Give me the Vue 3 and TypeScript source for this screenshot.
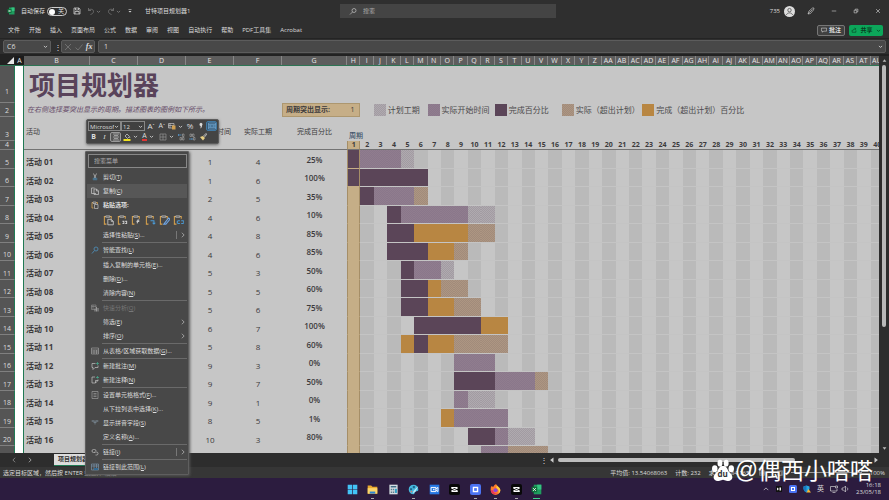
<script setup lang="ts">
import { h, ref } from 'vue'

type Shape = { d: string; f?: string; s?: string; w?: number }
type Kind = 'done' | 'actual' | 'plan' | 'over' | 'overdone'
type Segment = [Kind, number, number]
interface Task { start: number; days: number; pct: number; bars: Segment[] }
interface MenuItem { text?: string; key?: string; tail?: string; icon?: string; arrow?: boolean; split?: boolean; state?: string; kind?: 'line' | 'paste' }

// All icons share a 16 x 16 canvas.
const icons: Record<string, Shape[]> = {
  excel: [{ d: 'M4 1h11v14H4z', f: '#1f9d5f' }, { d: 'M9 1h6v7H9z', f: '#35c481' }, { d: 'M1 4h8v8H1z', f: '#0f703b' }, { d: 'M3 6l4 4M7 6l-4 4', s: '#fff', w: 1.3 }],
  save: [{ d: 'M2 2h10l2 2v10H2zM5 2v4h6V2M4 14V9h8v5', s: '#ddd', w: 1.4 }],
  undo: [{ d: 'M3 2v5h5M3 7c3-4 10-3 10 2 0 3-3 5-6 6', s: '#777', w: 1.6 }],
  redo: [{ d: 'M13 2v5H8M13 7C10 3 3 4 3 9c0 3 3 5 6 6', s: '#777', w: 1.6 }],
  caret: [{ d: 'M3 6l5 5 5-5', s: '#ddd', w: 2.6 }],
  caretDim: [{ d: 'M3 6l5 5 5-5', s: '#888', w: 2.4 }],
  more: [{ d: 'M4 4h8', s: '#ddd', w: 1.5 }, { d: 'M4 8h8l-4 4z', f: '#ddd' }],
  search: [{ d: 'M6 7a4 4 0 1 0 8 0 4 4 0 1 0-8 0M7 10l-5 5', s: '#bbb', w: 1.5 }],
  find: [{ d: 'M6 6a4 4 0 1 0 8 0 4 4 0 1 0-8 0M7 9l-5 6', s: '#4d84a8', w: 2 }],
  user: [{ d: 'M0 8a8 8 0 1 0 16 0 8 8 0 1 0-16 0', f: '#ddd' }, { d: 'M5.500 6a2.500 2.500 0 1 0 5 0 2.500 2.500 0 1 0-5 0M3.500 13c1-4 8-4 9 0', s: '#555', w: 1.2 }],
  pen: [{ d: 'M2 14l2-6 7-6h3l-1 4-6 7zM5 11l6-6M2 14l3-3', s: '#ccc', w: 1.3 }],
  min: [{ d: 'M2 8h12', s: '#ddd', w: 1.5 }],
  restore: [{ d: 'M3 6h7v7H3zM6 6V3h7v7h-3', s: '#ddd', w: 1.5 }],
  close: [{ d: 'M3 3l10 10M13 3L3 13', s: '#ddd', w: 1.6 }],
  bubble: [{ d: 'M1 3h14v8H7l-3 3v-3H1z', s: '#ddd', w: 1.5 }],
  share: [{ d: 'M3 8v6h10V9M5 10c0-4 3-5 7-5M10 2l3 3-3 3', s: '#083d21', w: 1.6 }],
  shareDown: [{ d: 'M3 6l5 5 5-5', s: '#083d21', w: 2.4 }],
  cancel: [{ d: 'M2 2l12 12M14 2L2 14', s: '#7c7c7c', w: 1.5 }],
  check: [{ d: 'M1 9l5 5 9-11', s: '#7c7c7c', w: 1.5 }],
  cut: [{ d: 'M5 1l4 9M11 1L7 10', s: '#ccc', w: 1.3 }, { d: 'M4 12a2 2 0 1 0 4 0 2 2 0 1 0-4 0M8 12a2 2 0 1 0 4 0 2 2 0 1 0-4 0', s: '#4c90bd', w: 1.3 }],
  copy: [{ d: 'M10 13H1V2h6M6 4h5l4 4v7H6zM11 4v4h4', s: '#ccc', w: 1.4 }],
  paste: [{ d: 'M5 14H2V3h2M10 3h3v3', s: '#d7a14c', w: 1.6 }, { d: 'M4 2h6v3H4zM7 7h7v8H7z', s: '#ccc', w: 1.3 }],
  quick: [{ d: 'M1 2h9v9H1zM1 5h9M4 2v9', s: '#8b8b8b', w: 1.3 }, { d: 'M7 9h2v6H7zM10 6h2v9h-2zM13 8h2v7h-2z', f: '#999' }],
  table: [{ d: 'M1 2h14v12H1zM1 6h14M1 10h14M6 6v8M11 6v8', s: '#aaa', w: 1.2 }],
  comment: [{ d: 'M9 3H2v8h2v4l4-4h6V7', s: '#ccc', w: 1.3 }, { d: 'M13 0v6M10 3h6', s: '#46a88c', w: 1.5 }],
  note: [{ d: 'M8 2H2v12h7l5-5V7M9 14V9h5', s: '#ccc', w: 1.3 }, { d: 'M13 0v5M10 3h6', s: '#46a88c', w: 1.5 }],
  format: [{ d: 'M2 1h12v14H2zM5 5h6M5 8h6M5 11h6', s: '#aaa', w: 1.2 }],
  pinyin: [{ d: 'M1 4h14M4 2v4M12 2v4M8 4v7M5 7h6', s: '#7d8c98', w: 1.4 }],
  link: [{ d: 'M8 9H5a3 3 0 1 1 0-6h2a3 3 0 0 1 3 3M7 8h4a3 3 0 1 1 0 6H9', s: '#bbb', w: 1.5 }],
  range: [{ d: 'M1 2h14v12H1zM1 6h14M6 2v12M11 2v12', s: '#7d9cb5', w: 1.2 }, { d: 'M6 10h8v4H6z', f: '#346a92' }],
  right: [{ d: 'M5 2l6 6-6 6', s: '#bbb', w: 2 }],
  left: [{ d: 'M11 2L5 8l6 6', s: '#999', w: 2 }],
  up: [{ d: 'M2 11l6-6 6 6', s: '#ddd', w: 1.8 }],
  triUp: [{ d: 'M2 12h12L8 4z', f: '#bbb' }],
  triDown: [{ d: 'M2 4h12l-6 8z', f: '#bbb' }],
  triLeft: [{ d: 'M12 1v14L3 8z', f: '#ccc' }],
  triRight: [{ d: 'M4 1v14l9-7z', f: '#ccc' }],
  corner: [{ d: 'M16 0v16H0z', f: '#e8e8e8' }],
  center: [{ d: 'M2 2h12M4 5h8M2 8h12M4 11h8M2 14h12', s: '#ccc', w: 1.2 }],
  fill: [{ d: 'M4 6l4-4 5 5-4 4zM13 8l1 2', s: '#ddd', w: 1.3 }, { d: 'M1 12h14v4H1z', f: '#f0e21e' }],
  borders: [{ d: 'M2 2h12v12H2zM2 8h12M8 2v12', s: '#999', w: 1.3 }],
  numfmt: [{ d: 'M1 3h11v9H1zM4 3v9M1 7h11', s: '#ccc', w: 1.3 }, { d: 'M8 7h7v8H8z', f: '#cf9f50' }],
  merge: [{ d: 'M1 2h14v12H1zM1 5h14M1 11h14', s: '#7fb4dc', w: 1.2 }, { d: 'M3 8h10M5 6L3 8l2 2M11 6l2 2-2 2', s: '#7fc2f4', w: 1.2 }],
  decUp: [{ d: 'M9 4H2M4 2L2 4l2 2', s: '#5796c8', w: 1.5 }, { d: 'M11 2h3v5h-3zM6 9h3v5H6zM11 9h3v5h-3z', s: '#aaa', w: 1.2 }],
  decDown: [{ d: 'M2 12h7M7 10l2 2-2 2', s: '#5796c8', w: 1.5 }, { d: 'M4 2h3v5H4zM9 2h3v5H9zM11 9h3v5h-3z', s: '#aaa', w: 1.2 }],
  brush: [{ d: 'M9 6l5-5 1 2-4 5', s: '#ddd', w: 1.6 }, { d: 'M2 8l6-2 4 4-4 5z', f: '#e8cf83' }],
  comma: [{ d: 'M5 5a3 3 0 1 1 5 2c0 3-1 5-4 6 1-1 2-3 1-5a3 3 0 0 1-2-3', f: '#ddd' }],
  win: [{ d: 'M1 1h6.500v6.500H1zM8.500 1H15v6.500H8.500zM1 8.500h6.500V15H1zM8.500 8.500H15V15H8.500z', f: '#43c3f7' }],
  folder: [{ d: 'M1 2h5l2 2h7v10H1z', f: '#e9a92d' }, { d: 'M1 6h14v8H1z', f: '#fcd56a' }, { d: 'M4 11h8v3H4z', f: '#2d86d4' }],
  calc: [{ d: 'M2 1h12v14H2z', f: '#d5dde2' }, { d: 'M4 3h8v2H4z', f: '#37657e' }, { d: 'M4 7h2v2H4zM7 7h2v2H7zM4 11h2v2H4zM7 11h2v2H7z', f: '#5b7c8c' }, { d: 'M10 7h3v6h-3z', f: '#2f9fc4' }],
  palette: [{ d: 'M8 1a7 7 0 1 0 0 14c2 0 1-3 3-4s4 0 4-3a7 7 0 0 0-7-7', f: '#45b8dc' }, { d: 'M3 6h3v3H3zM7 3h3v3H7z', f: '#1d668c' }, { d: 'M15 3l-7 7-1 4 4-3z', f: '#bcecf6' }, { d: 'M4 10h2v2H4z', f: '#e87562' }],
  video: [{ d: 'M1 1h14v14H1z', f: '#2779e4' }, { d: 'M3 5h7v6H3zM10 7l3-2v6l-3-2', s: '#fff', w: 1.4 }, { d: 'M6 7h2v2H6z', f: '#fff' }],
  cap: [{ d: 'M3 0h10a3 3 0 0 1 3 3v10a3 3 0 0 1-3 3H3a3 3 0 0 1-3-3V3a3 3 0 0 1 3-3', f: '#080808' }, { d: 'M12 5H4v1l8 4v1H4M4 11v-1l8-4V5', s: '#fff', w: 1.5 }],
  chat: [{ d: 'M3 0h10a3 3 0 0 1 3 3v10a3 3 0 0 1-3 3H3a3 3 0 0 1-3-3V3a3 3 0 0 1 3-3', f: '#4b73f3' }, { d: 'M4 4h8v8H4z', f: '#fff' }, { d: 'M6 6h4v4H6z', f: '#4b73f3' }],
  fox: [{ d: 'M2 3c1 1 2 1 3 1 1-2 2-3 4-4 0 3 6 4 6 9a7 7 0 0 1-14 0c0-3 0-4 1-6', f: '#ff7a2a' }, { d: 'M10 1c0 3 5 4 5 8 0 2-1 4-3 5 2-4 0-7-3-8z', f: '#ffd43b' }, { d: 'M5 9a3 3 0 1 0 6 0 3 3 0 1 0-6 0', f: '#8b46d8' }, { d: 'M1 9c1 6 7 7 10 5-4 0-6-2-7-5z', f: '#e92c61' }],
  shield: [{ d: 'M7 1l6 2v4c0 4-3 6-6 8-3-2-6-4-6-8V3z', f: '#29a9e1' }, { d: 'M7 1v14C4 13 1 11 1 7V3z', f: '#1878bf' }, { d: 'M11 8l5 7H7z', f: '#f5b634' }],
  monitor: [{ d: 'M10 3H1v9h13V8M5 15h6M11 2h4v4h-4z', s: '#ddd', w: 1.3 }],
  sound: [{ d: 'M2 6h3l4-4v12l-4-4H2zM12 5c2 2 2 4 0 6', s: '#ddd', w: 1.3 }],
  dot: [{ d: 'M2 2h12v12H2z', f: '#111' }, { d: 'M4 5l4 3-4 3zM9 5h3v6H9z', f: '#eee' }],
  paw: [{ d: 'M4 9C5 6 6 5 8 5s3 1 4 4l2 2c2 3 0 5-3 5l-3-1-3 1c-3 0-5-2-3-5zM0 7a2 2.500 0 1 0 4 0 2 2.500 0 1 0-4 0M4 3a1.800 2.500 0 1 0 3.600 0 1.800 2.500 0 1 0-3.600 0M8.500 3a1.800 2.500 0 1 0 3.600 0 1.800 2.500 0 1 0-3.600 0M12 7a2 2.500 0 1 0 4 0 2 2.500 0 1 0-4 0', f: '#fff' }],
  grid: [{ d: 'M1 2h14v12H1zM1 6h14M1 10h14M6 2v12M10 2v12', s: '#bbb', w: 1.2 }],
  page: [{ d: 'M1 2h14v12H1zM4 4h8v10H4z', s: '#bbb', w: 1.2 }],
}

const Icon = (props: { n: string }) =>
  h('svg', { viewBox: '0 0 16 16', class: 'ico', 'aria-hidden': 'true' },
    (icons[props.n] ?? []).map((p) => h('path', { d: p.d, fill: p.f ?? 'none', stroke: p.s ?? 'none', 'stroke-width': p.w ?? 0 })))
Icon.props = ['n']

const tabs = ['文件', '开始', '插入', '页面布局', '公式', '数据', '审阅', '视图', '自动执行', '帮助', 'PDF工具集', 'Acrobat']
const wideCols = ['B', 'C', 'D', 'E', 'F', 'G']
const colName = (n: number): string => (n > 26 ? 'A' + String.fromCharCode(38 + n) : String.fromCharCode(64 + n))
const periods = Array.from({ length: 40 }, (_, i) => i + 1)

const tasks: Task[] = [
  { start: 1, days: 4, pct: 25, bars: [['done', 1, 1], ['actual', 2, 4], ['plan', 5, 5]] },
  { start: 1, days: 6, pct: 100, bars: [['done', 1, 6]] },
  { start: 2, days: 5, pct: 35, bars: [['done', 2, 2], ['actual', 3, 5], ['over', 6, 6]] },
  { start: 4, days: 6, pct: 10, bars: [['done', 4, 4], ['actual', 5, 9], ['plan', 10, 11]] },
  { start: 4, days: 8, pct: 85, bars: [['done', 4, 5], ['overdone', 6, 9], ['over', 10, 11]] },
  { start: 4, days: 6, pct: 85, bars: [['done', 4, 6], ['overdone', 7, 8], ['over', 9, 9]] },
  { start: 5, days: 3, pct: 50, bars: [['done', 5, 5], ['actual', 6, 7], ['plan', 8, 8]] },
  { start: 5, days: 5, pct: 60, bars: [['done', 5, 6], ['overdone', 7, 7], ['over', 8, 9]] },
  { start: 5, days: 6, pct: 75, bars: [['done', 5, 6], ['overdone', 7, 8], ['over', 9, 10]] },
  { start: 6, days: 7, pct: 100, bars: [['done', 6, 10], ['overdone', 11, 12]] },
  { start: 5, days: 8, pct: 60, bars: [['overdone', 5, 5], ['done', 6, 6], ['overdone', 7, 8], ['over', 9, 12]] },
  { start: 9, days: 3, pct: 0, bars: [['actual', 9, 11]] },
  { start: 9, days: 7, pct: 50, bars: [['done', 9, 11], ['actual', 12, 14], ['over', 15, 15]] },
  { start: 9, days: 1, pct: 0, bars: [['actual', 9, 9], ['plan', 10, 11]] },
  { start: 8, days: 5, pct: 1, bars: [['overdone', 8, 8], ['actual', 9, 12]] },
  { start: 10, days: 3, pct: 80, bars: [['done', 10, 11], ['actual', 12, 12], ['plan', 13, 14]] },
]
// The last row is only partly scrolled into view, so it shows just its bars.
const peekBars: Segment[] = [['actual', 11, 12], ['over', 13, 15]]
const kindAt = (bars: Segment[], p: number): string => bars.find((b) => p >= b[1] && p <= b[2])?.[0] ?? ''

const legend: { kind: Kind; text: string; cls: string }[] = [
  { kind: 'plan', text: '计划工期', cls: 'lg-a' },
  { kind: 'actual', text: '实际开始时间', cls: 'lg-b' },
  { kind: 'done', text: '完成百分比', cls: 'lg-c' },
  { kind: 'over', text: '实际（超出计划）', cls: 'lg-d' },
  { kind: 'overdone', text: '完成（超出计划）百分比', cls: 'lg-e' },
]

const line: MenuItem = { kind: 'line' }
const menu: MenuItem[] = [
  { text: '剪切', key: 'T', icon: 'cut' },
  { text: '复制', key: 'C', icon: 'copy', state: 'hover' },
  { text: '粘贴选项:', icon: 'paste', state: 'strong' },
  { kind: 'paste' },
  { text: '选择性粘贴', key: 'S', tail: '...', arrow: true, split: true },
  line,
  { text: '智能查找', key: 'L', icon: 'find' },
  line,
  { text: '插入复制的单元格', key: 'E', tail: '...' },
  { text: '删除', key: 'D', tail: '...' },
  { text: '清除内容', key: 'N' },
  line,
  { text: '快速分析', key: 'Q', icon: 'quick', state: 'off' },
  { text: '筛选', key: 'E', arrow: true },
  { text: '排序', key: 'O', arrow: true },
  line,
  { text: '从表格/区域获取数据', key: 'G', tail: '...', icon: 'table' },
  line,
  { text: '新建批注', key: 'M', icon: 'comment' },
  { text: '新建注释', key: 'N', icon: 'note' },
  line,
  { text: '设置单元格格式', key: 'F', tail: '...', icon: 'format' },
  { text: '从下拉列表中选择', key: 'K', tail: '...' },
  { text: '显示拼音字段', key: 'S', icon: 'pinyin' },
  { text: '定义名称', key: 'A', tail: '...' },
  line,
  { text: '链接', key: 'I', icon: 'link', arrow: true, split: true },
  line,
  { text: '链接到此范围', key: 'L', icon: 'range' },
]
const pasteKinds = [
  { name: '粘贴', d: '', c: '' },
  { name: '值', d: 'M8 10h2v3H8M12 10h2v3h-2', c: '#ccc' },
  { name: '公式', d: 'M9 13l1-5h2M8 10h4', c: '#ccc' },
  { name: '转置', d: 'M8 9h5v5M11 12l2 2 2-2', c: '#4b9ad4' },
  { name: '格式', d: 'M7 14l7-9 2 2-6 7z', c: '#6ea6e8' },
  { name: '粘贴链接', d: 'M10 13H8a2 2 0 0 1 0-4h2M12 9h2a2 2 0 0 1 0 4h-2', c: '#4b9ad4' },
]
const apps = [
  { n: 'win', run: false }, { n: 'folder', run: true }, { n: 'calc', run: false }, { n: 'palette', run: true }, { n: 'video', run: false },
  { n: 'cap', run: false }, { n: 'chat', run: true }, { n: 'fox', run: true }, { n: 'cap', run: true }, { n: 'excel', run: true },
]

const autosave = ref(false)
const cell = ref('C6')
const formula = ref('1')
const query = ref('')
const menuQuery = ref('')
</script>

<template>
  <div class="app">
    <header class="titlebar">
      <div class="quick">
        <Icon n="excel" class="logo" />
        <label class="auto">自动保存
          <span class="switch"><input v-model="autosave" type="checkbox"><span>关</span></span>
        </label>
        <button aria-label="保存"><Icon n="save" /></button>
        <button class="hist" aria-label="撤消"><Icon n="undo" /><Icon n="caretDim" class="xs" /></button>
        <button class="hist" aria-label="恢复"><Icon n="redo" /><Icon n="caretDim" class="xs" /></button>
        <button aria-label="自定义快速访问工具栏"><Icon n="more" class="sm" /></button>
        <span class="doc">甘特项目规划器1</span>
      </div>
      <label class="search"><Icon n="search" /><input v-model="query" type="text" placeholder="搜索" aria-label="搜索"></label>
      <div class="window">
        <span>735</span>
        <Icon n="user" class="avatar" />
        <button aria-label="墨迹"><Icon n="pen" /></button>
        <button aria-label="最小化"><Icon n="min" class="sm" /></button>
        <button aria-label="还原"><Icon n="restore" class="sm" /></button>
        <button aria-label="关闭"><Icon n="close" class="sm" /></button>
      </div>
    </header>

    <nav class="ribbon">
      <a v-for="t in tabs" :key="t" href="#">{{ t }}</a>
      <button class="note-btn"><Icon n="bubble" class="sm" />批注</button>
      <button class="share-btn"><Icon n="share" class="sm" />共享<Icon n="shareDown" class="xs" /></button>
    </nav>

    <div class="formula">
      <label class="name"><input v-model="cell" type="text" aria-label="名称框"><Icon n="caret" class="xs" /></label>
      <span class="dots">⋮</span>
      <div class="fx">
        <button aria-label="取消"><Icon n="cancel" /></button>
        <button aria-label="输入"><Icon n="check" /></button>
        <button class="fn">fx</button>
      </div>
      <label class="value"><input v-model="formula" type="text" aria-label="编辑栏"><Icon n="caret" class="xs" /></label>
    </div>

    <main class="work">
      <div class="sheet">
        <table>
          <thead>
            <tr class="cols">
              <th class="corner"><Icon n="corner" /></th>
              <th class="col-a">A</th>
              <th v-for="c in wideCols" :key="c">{{ c }}</th>
              <th v-for="p in periods" :key="p">{{ colName(p + 7) }}</th>
            </tr>
          </thead>
          <tbody>
            <tr class="r1"><th>1</th><td class="gut" /><td class="rest title"><h1>项目规划器</h1></td></tr>
            <tr class="r2">
              <th>2</th><td class="gut" /><td class="hint">在右侧选择要突出显示的周期。描述图表的图例如下所示。</td>
              <td class="pick"><span>周期突出显示:</span><span>1</span></td>
              <td v-for="l in legend" :key="l.kind" :class="['legend', l.cls]"><i :class="l.kind" />{{ l.text }}</td>
            </tr>
            <tr class="r3">
              <th>3</th><td class="gut" /><td class="left">活动</td><td /><td /><td>实际开始时间</td>
              <td>实际工期</td><td>完成百分比</td><td class="per">周期</td>
            </tr>
            <tr class="r4">
              <th>4</th><td class="gut" /><td class="gap" />
              <td v-for="p in periods" :key="p" :class="['num', { pickcol: p === 1 }]">{{ p }}</td>
            </tr>
            <tr v-for="(t, i) in tasks" :key="i" class="task">
              <th>{{ i + 5 }}</th><td class="gut" />
              <td class="left act">活动 {{ String(i + 1).padStart(2, '0') }}</td><td /><td />
              <td>{{ t.start }}</td><td>{{ t.days }}</td><td class="pct">{{ t.pct }}%</td>
              <td v-for="p in periods" :key="p" :class="['slot', kindAt(t.bars, p), { pickcol: p === 1, even: p % 2 === 0 }]" />
            </tr>
            <tr class="task">
              <th /><td class="gut" /><td /><td /><td /><td /><td /><td />
              <td v-for="p in periods" :key="p" :class="['slot', kindAt(peekBars, p), { pickcol: p === 1, even: p % 2 === 0 }]" />
            </tr>
          </tbody>
        </table>
      </div>
      <div class="vbar"><Icon n="triUp" class="xs" /><div class="track"><span /></div><Icon n="triDown" class="xs" /></div>
    </main>

    <footer class="tabsbar">
      <button aria-label="上一个工作表"><Icon n="left" class="sm" /></button>
      <button aria-label="下一个工作表"><Icon n="right" class="sm" /></button>
      <a href="#" class="tab">项目规划器</a>
      <div class="hbar"><span>⋮</span><Icon n="triLeft" class="sm" /><div class="htrack"><span /></div><Icon n="triRight" class="sm" /></div>
    </footer>
    <div class="status">
      <span class="msg">选定目标区域，然后按 ENTER 或选择“粘贴”</span>
      <span>平均值: 13.54068063</span><span>计数: 232</span><span class="sum">求和: 2884.165</span>
      <span class="views"><Icon n="grid" class="sm" /><Icon n="page" class="sm" /></span>
      <span class="zoomline" /><span>100%</span>
    </div>

    <div class="taskbar">
      <div class="apps">
        <button v-for="(a, i) in apps" :key="i" :class="{ run: a.run, current: i === 9 }" :aria-label="a.n"><Icon :n="a.n" /></button>
      </div>
      <div class="tray">
        <Icon n="up" class="sm" /><Icon n="dot" /><Icon n="chat" /><Icon n="shield" /><span class="ime">英</span>
        <span class="net"><Icon n="monitor" /><Icon n="sound" /></span>
        <span class="clock">16:18<br>23/05/18</span>
      </div>
    </div>

    <div class="mini">
      <div class="bar">
        <label class="pickbox font"><select aria-label="字体"><option>Microsof</option></select><Icon n="caret" class="xs" /></label>
        <label class="pickbox size"><select aria-label="字号"><option>12</option></select><Icon n="caret" class="xs" /></label>
        <button class="big">A<sup>ˆ</sup></button><button>A<sup>ˇ</sup></button>
        <button class="wide" aria-label="数字格式"><Icon n="numfmt" /><Icon n="caret" class="xs" /></button>
        <button class="big">%</button><button aria-label="千位分隔样式"><Icon n="comma" /></button>
        <button class="on blue" aria-label="合并后居中"><Icon n="merge" /></button>
      </div>
      <div class="bar">
        <button><b>B</b></button><button><em>I</em></button>
        <button class="on" aria-label="居中"><Icon n="center" /></button>
        <button class="wide" aria-label="填充颜色"><Icon n="fill" /><Icon n="caret" class="xs" /></button>
        <button class="wide"><span class="ink">A</span><Icon n="caret" class="xs" /></button>
        <button class="wide" aria-label="边框"><Icon n="borders" /><Icon n="caret" class="xs" /></button>
        <button aria-label="增加小数位数"><Icon n="decUp" /></button>
        <button aria-label="减少小数位数"><Icon n="decDown" /></button>
        <button aria-label="格式刷"><Icon n="brush" /></button>
      </div>
    </div>

    <div class="menu">
      <input v-model="menuQuery" type="text" placeholder="搜索菜单" aria-label="搜索菜单">
      <template v-for="(m, i) in menu" :key="i">
        <hr v-if="m.kind === 'line'">
        <div v-else-if="m.kind === 'paste'" class="pastes">
          <button v-for="p in pasteKinds" :key="p.name" :aria-label="p.name">
            <svg viewBox="0 0 16 16" class="ico">
              <path d="M5 14H2V3h2M10 3h2v3" fill="none" stroke="#d7a14c" stroke-width="1.500" />
              <path d="M4 2h6v2H4z" fill="none" stroke="#ccc" />
              <path v-if="!p.d" d="M7 7h5l3 3v5H7zM12 7v3h3" fill="none" stroke="#ccc" stroke-width="1.200" />
              <path v-else :d="p.d" fill="none" :stroke="p.c" stroke-width="1.500" />
            </svg>
          </button>
        </div>
        <button v-else :class="['item', m.state]">
          <span class="mi"><Icon v-if="m.icon" :n="m.icon" /></span>
          <span class="mt">{{ m.text }}<template v-if="m.key">(<u>{{ m.key }}</u>)</template>{{ m.tail }}</span>
          <span v-if="m.arrow" :class="['ma', { split: m.split }]"><Icon n="right" class="sm" /></span>
        </button>
      </template>
    </div>

    <div class="mark"><span class="paw"><Icon n="paw" /><b>du</b></span><span class="at">@</span>偶西小嗒嗒</div>
  </div>
</template>

<style>
html, body { margin: 0; height: 100%; overflow: hidden; background: #2b1b3c; }
</style>

<style scoped>
.app { position: relative; display: flex; flex-direction: column; height: 100vh; overflow: hidden; background: #2f2f2f; color: #ddd; font: 6px/10px "Open Sans", "Noto Sans CJK SC", sans-serif; white-space: nowrap; }
.app *, .app *::before { box-sizing: border-box; }
button { display: flex; align-items: center; justify-content: center; padding: 0; border: 0; background: none; color: inherit; font: inherit; }
input, select { min-width: 0; padding: 0; border: 0; outline: 0; background: none; color: inherit; font: inherit; }
a { color: inherit; text-decoration: none; }
.ico { display: block; width: 8px; height: 8px; flex: none; }
.ico.sm { width: 6px; height: 6px; }
.ico.xs { width: 5px; height: 5px; }

.titlebar { display: grid; grid-template-columns: 1fr 216px 1fr; align-items: center; height: 22px; padding-left: 7px; flex: none; }
.quick { display: flex; align-items: center; gap: 6px; }
.auto { display: flex; align-items: center; gap: 2px; }
.switch { display: flex; width: 20px; height: 9px; border: 1px solid #ccc; border-radius: 5px; }
.switch input { appearance: none; width: 6px; height: 6px; margin: 1px 0 0 1px; border-radius: 50%; background: #fff; }
.switch span { margin-left: 3px; line-height: 7px; }
.hist { gap: 1px; }
.doc { margin-left: 6px; }
.search { display: flex; align-items: center; gap: 6px; height: 14px; padding: 0 9px; background: #444; color: #bbb; }
.search input { flex: 1; }
input::placeholder { color: #aaa; opacity: 1; }
.window { display: flex; align-items: center; justify-content: flex-end; gap: 16px; padding-right: 8px; }
.window .avatar { width: 11px; height: 11px; margin: 0 -4px 0 -12px; }

.ribbon { display: flex; align-items: center; gap: 9px; height: 16px; padding: 0 6px 0 8px; flex: none; }
.ribbon a { line-height: 14px; }
.note-btn { gap: 2px; width: 28px; height: 11px; margin-left: auto; border: 1px solid #777; border-radius: 2px; background: #404040; font-weight: 700; }
.share-btn { gap: 3px; width: 34px; height: 11px; margin-left: -5px; border-radius: 2px; background: #0ca65a; color: #083d21; font-weight: 700; }

.formula { display: flex; align-items: center; gap: 3px; height: 18px; padding: 2px 3px; flex: none; border-top: 1px solid #242424; border-bottom: 2px solid #222; }
.name, .fx, .value { display: flex; align-items: center; height: 13px; border: 1px solid #5c5c5c; border-radius: 2px; background: #484848; }
.name { width: 48px; padding: 0 2px 0 3px; }
.name input, .value input { flex: 1; width: 10px; font-size: 7px; }
.dots { width: 4px; font-size: 8px; text-align: center; }
.fx { justify-content: space-around; width: 34px; }
.fn { font: italic 700 8px/10px "Liberation Serif", serif; }
.value { flex: 1; padding: 0 2px 0 5px; }

.work { display: flex; flex: 1; min-height: 0; background: #c6c6c6; }
.sheet { flex: 1; min-width: 0; overflow: hidden; }
table, thead, tbody { display: block; }
table { width: calc(100% + 5px); color: #3c3a3c; font-size: 8px; }
tr { display: grid; grid-template-columns: 15px 9px 66px repeat(4, 48px) 65px repeat(40, minmax(0, 1fr)); }
th, td { display: flex; align-items: center; justify-content: center; min-width: 0; padding: 0; overflow: visible; }
.cols { height: 10px; background: #5d5d5d; border-bottom: 1px solid #2d7554; }
.cols th { border-right: 1px solid #878787; color: #e6e6e6; font-size: 7px; font-weight: 400; line-height: 9px; }
.cols .corner { justify-content: flex-end; padding-right: 1px; border: 0; background: #222; }
.cols .col-a { border: 0; background: #1c1c1c; }
.cols .corner .ico { width: 7px; height: 7px; }
tbody th { align-items: flex-end; padding-bottom: 1px; border-right: 1px solid #207a54; border-bottom: 1px solid #808080; background: #555; color: #ddd; font-size: 7px; font-weight: 400; line-height: 9px; }
.gut { border-right: 1px solid #207a54; background: #fff; }
.r1 { height: 37px; }
.r1 th { padding-bottom: 6px; }
.r2 { height: 14px; }
.r3 { height: 24px; font-size: 7px; }
.r4 { height: 9px; }
.r4 th { padding: 0; line-height: 8px; }
.task { height: 18px; }
.task:nth-child(odd) { height: 19px; }
.rest { grid-column: 3 / -1; }
.title { justify-content: flex-start; padding-left: 5px; }
h1 { margin: 0; color: #59435a; font-size: 26px; font-weight: 700; line-height: 36px; }
.hint { grid-column: 3 / 8; justify-content: flex-start; padding-left: 3px; color: #654967; font-size: 7px; font-style: italic; }
.pick { grid-column: 8 / 10; justify-content: space-between; padding: 0 5px 0 3px; border: 1px solid #ad976f; background: #c6ae87; font-size: 7px; }
.pick span:first-child { font-weight: 700; }
.legend { grid-row: 1; justify-content: flex-start; gap: 2px; color: #4c4a4c; }
.legend i { width: 12px; height: 12px; flex: none; }
.lg-a { grid-column: 11 / 15; }
.lg-b { grid-column: 15 / 20; }
.lg-c { grid-column: 20 / 25; }
.lg-d { grid-column: 25 / 31; }
.lg-e { grid-column: 31 / -1; }
.r3 td { padding-top: 6px; }
.r3 .left, .left { justify-content: flex-start; padding-left: 2px; }
.r3 .per { grid-column: 9 / 12; justify-content: flex-start; padding: 13px 0 0 2px; color: #41546a; font-weight: 500; }
.r4 .gap { grid-column: 3 / 9; }
.r4 td { border-bottom: 1px solid #737373; }
.r4 .gut { border-bottom: 0; }
.num { font-weight: 700; font-size: 7px; line-height: 8px; }
.task td { padding-top: 5px; }
.task .act { font-weight: 700; }
.task .pct { padding-top: 0; font-weight: 600; }
.task .slot { padding: 0; border-bottom: 1px solid #c4c4c4; }
.even { background: #bababa; }
.pickcol { border-right: 1px solid #a58e67; border-left: 1px solid #a58e67; background: #c5ae87; }
.task .slot.pickcol { border-bottom-color: #c5ae87; }
.done { background: #5b4558; }
.actual { background: repeating-conic-gradient(#8a778b 0 25%, #907d8e 0 50%) 0 0 / 2px 2px; }
.plan { background: repeating-conic-gradient(#a29ba2 0 25%, #afaaaf 0 50%) 0 0 / 2px 2px; }
.over { background: repeating-conic-gradient(#a18b7b 0 25%, #ad9682 0 50%) 0 0 / 2px 2px; }
.overdone { background: #b88642; }

.vbar { display: flex; flex-direction: column; align-items: center; gap: 2px; width: 10px; padding: 2px 0; background: #2d2d2d; }
.track { flex: 1; }
.track span { display: block; width: 4px; height: 69%; border-radius: 2px; background: #b9b9b9; }

.tabsbar { display: flex; align-items: center; gap: 10px; height: 14px; padding: 0 10px 0 11px; flex: none; background: #2d2d2d; }
.tab { height: 12px; margin-left: 11px; padding: 0 4px; border-bottom: 1px solid #207a54; background: #ddd; color: #333; font-weight: 700; line-height: 11px; }
.hbar { display: flex; align-items: center; gap: 3px; width: 39%; margin-left: auto; }
.hbar > span { width: 6px; font-size: 8px; }
.htrack { flex: 1; }
.htrack span { display: block; width: 76%; height: 4px; border-radius: 2px; background: #bdbdbd; }
.status { display: flex; align-items: center; gap: 8px; height: 11px; padding: 0 4px 0 3px; flex: none; background: #363636; }
.msg { margin-right: auto; }
.sum { width: 42px; }
.views { display: flex; gap: 12px; }
.zoomline { width: 71px; height: 1px; background: #999; }

.taskbar { display: grid; grid-template-columns: 1fr 195px 1fr; align-items: center; height: 22px; padding: 0 8px; flex: none; background: #2c1c3f; }
.apps { display: flex; grid-column: 2; justify-content: space-between; }
.apps button { position: relative; height: 20px; }
.apps .ico { width: 11px; height: 11px; }
.apps .run::before { content: ""; position: absolute; bottom: 0; width: 3px; height: 1px; background: #aaa; }
.apps .current::before { width: 7px; background: #41d18b; }
.tray { display: flex; align-items: center; justify-content: flex-end; gap: 6px; }
.ime { font-size: 7px; }
.net { display: flex; gap: 3px; }
.clock { width: 26px; line-height: 7px; text-align: right; }

.mini { position: absolute; top: 119px; left: 86px; display: flex; flex-direction: column; width: 133px; height: 25px; padding: 1px; border: 1px solid #5c5c5c; border-radius: 2px; background: #444; box-shadow: 0 1px 3px #666; }
.bar { display: flex; align-items: center; height: 11px; }
.bar button { width: 11px; height: 10px; font-size: 7px; }
.bar .big { font-size: 8px; }
.bar .wide { gap: 2px; width: 18px; }
.bar sup { font-size: 5px; line-height: 4px; }
.bar .on { border: 1px solid #999; border-radius: 2px; background: #565656; }
.bar .blue { margin-left: auto; border-color: #4179a3; background: #315674; }
.bar em { font-family: "Liberation Serif", serif; }
.ink { height: 9px; border-bottom: 2px solid #e03535; line-height: 7px; }
.pickbox { display: flex; align-items: center; height: 10px; padding: 0 1px; border: 1px solid #888; background: #404040; }
.pickbox select { flex: 1; height: 8px; appearance: none; }
.font { width: 33px; }
.size { width: 24px; margin-right: 1px; }

.menu { position: absolute; top: 151px; left: 85px; width: 104px; padding: 2px 1px 0; border: 1px solid #5f5f5f; border-radius: 1px; background: #484848; box-shadow: 1px 1px 3px #555; }
.menu > input { display: block; width: 99px; height: 14px; margin: 0 0 2px 1px; padding: 0 5px; border: 1px solid #888; background: #404040; }
.item { justify-content: flex-start; width: 100%; height: 14px; }
.item.hover { background: #575757; }
.item.strong { font-weight: 700; }
.item.off { color: #777; }
.mi { width: 16px; padding-left: 4px; }
.ma { display: flex; margin-left: auto; padding: 1px 1px 1px 3px; }
.ma.split { border-left: 1px solid #777; }
hr { height: 1px; margin: 0 0 0 15px; border: 0; background: #6a6a6a; }
.pastes { display: flex; gap: 3px; height: 16px; padding-left: 16px; align-items: center; }
.pastes .ico { width: 11px; height: 12px; }

.mark { position: absolute; right: 16px; bottom: 13px; display: flex; align-items: center; color: #fff; font-size: 23px; line-height: 34px; }
.at { font-family: "Liberation Sans", sans-serif; }
.paw { position: relative; margin-right: 1px; }
.paw .ico { width: 22px; height: 24px; }
.paw b { position: absolute; inset: 10px 0 0; color: #333; font-size: 8px; line-height: 12px; text-align: center; }
</style>
